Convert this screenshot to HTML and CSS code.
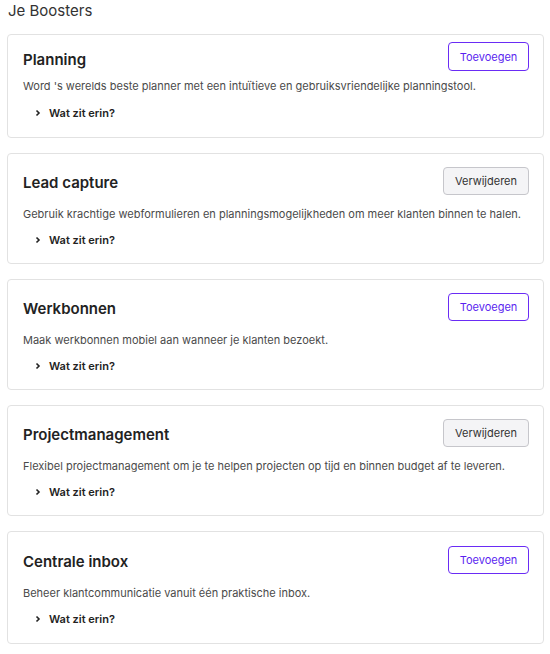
FILE: index.html
```html
<!DOCTYPE html>
<html lang="nl">
<head>
<meta charset="utf-8">
<title>Je Boosters</title>
<link rel="stylesheet" href="styles.css">
</head>
<body>
<div class="page">
  <h2 class="page-title">Je Boosters</h2>
  <div class="list">
    <section class="card card--first">
      <div class="card-head">
        <h3 class="card-title">Planning</h3>
        <button class="btn btn--add">Toevoegen</button>
      </div>
      <p class="card-desc">Word 's werelds beste planner met een intuïtieve en gebruiksvriendelijke planningstool.</p>
      <div class="more"><svg class="chev" width="6" height="8" viewBox="0 0 6 8"><path d="M1.5 1.5 L4 4 L1.5 6.5" fill="none" stroke="#222" stroke-width="1.6"/></svg><span>Wat zit erin?</span></div>
    </section>
    <section class="card">
      <div class="card-head">
        <h3 class="card-title">Lead capture</h3>
        <button class="btn btn--remove">Verwijderen</button>
      </div>
      <p class="card-desc">Gebruik krachtige webformulieren en planningsmogelijkheden om meer klanten binnen te halen.</p>
      <div class="more"><svg class="chev" width="6" height="8" viewBox="0 0 6 8"><path d="M1.5 1.5 L4 4 L1.5 6.5" fill="none" stroke="#222" stroke-width="1.6"/></svg><span>Wat zit erin?</span></div>
    </section>
    <section class="card">
      <div class="card-head">
        <h3 class="card-title">Werkbonnen</h3>
        <button class="btn btn--add">Toevoegen</button>
      </div>
      <p class="card-desc">Maak werkbonnen mobiel aan wanneer je klanten bezoekt.</p>
      <div class="more"><svg class="chev" width="6" height="8" viewBox="0 0 6 8"><path d="M1.5 1.5 L4 4 L1.5 6.5" fill="none" stroke="#222" stroke-width="1.6"/></svg><span>Wat zit erin?</span></div>
    </section>
    <section class="card">
      <div class="card-head">
        <h3 class="card-title">Projectmanagement</h3>
        <button class="btn btn--remove">Verwijderen</button>
      </div>
      <p class="card-desc">Flexibel projectmanagement om je te helpen projecten op tijd en binnen budget af te leveren.</p>
      <div class="more"><svg class="chev" width="6" height="8" viewBox="0 0 6 8"><path d="M1.5 1.5 L4 4 L1.5 6.5" fill="none" stroke="#222" stroke-width="1.6"/></svg><span>Wat zit erin?</span></div>
    </section>
    <section class="card card--last">
      <div class="card-head">
        <h3 class="card-title">Centrale inbox</h3>
        <button class="btn btn--add">Toevoegen</button>
      </div>
      <p class="card-desc">Beheer klantcommunicatie vanuit één praktische inbox.</p>
      <div class="more"><svg class="chev" width="6" height="8" viewBox="0 0 6 8"><path d="M1.5 1.5 L4 4 L1.5 6.5" fill="none" stroke="#222" stroke-width="1.6"/></svg><span>Wat zit erin?</span></div>
    </section>
  </div>
</div>
</body>
</html>
```
FILE: styles.css
```css
* { box-sizing: border-box; }
html, body { margin: 0; padding: 0; background: #fff; }
body { font-family: Inter, "Noto Sans", sans-serif; color: #222; }
.page { padding: 0 6px 0 7px; }
.page-title {
  margin: 0 0 0 1px;
  padding-top: 1px;
  height: 34px;
  font-size: 15px;
  line-height: 20px;
  font-weight: 400;
  color: #333;
}
.list { display: flex; flex-direction: column; gap: 15px; }
.card {
  border: 1px solid #e2e2e2;
  border-radius: 4px;
  padding: 13px 14px 15px 15px;
}
.card-head {
  display: flex;
  align-items: center;
  justify-content: space-between;
  margin-bottom: 11px;
}
.card-title {
  margin: 0;
  padding-top: 3px;
  font-size: 15px;
  line-height: 20px;
  font-weight: 600;
  color: #222;
}
.card--first { padding-top: 7px; padding-bottom: 16px; }
.card--first .card-head { margin-bottom: 7px; }
.card--first .card-title { padding-top: 7px; }
.card--first .card-desc { margin-bottom: 11px; }
.card--first .btn { height: 29px; }
.card--last { padding-top: 14px; padding-bottom: 16px; }
.btn {
  height: 28px;
  border-radius: 4px;
  font-family: inherit;
  font-size: 11px;
  padding: 0 10px;
  cursor: pointer;
}
.btn--add {
  width: 81px;
  background: #fff;
  border: 1px solid #6a2cf5;
  color: #5b1ff0;
}
.btn--remove {
  width: 86px;
  background: #f4f4f6;
  border: 1px solid #c6c6cb;
  color: #333;
}
.card-desc {
  margin: 0 0 10px;
  font-size: 11px;
  line-height: 16px;
  color: #4a4a4a;
}
.more {
  display: flex;
  align-items: center;
  gap: 8px;
  padding-left: 12px;
  font-size: 11px;
  line-height: 16px;
  font-weight: 600;
  color: #222;
}
.chev { display: block; }
```
